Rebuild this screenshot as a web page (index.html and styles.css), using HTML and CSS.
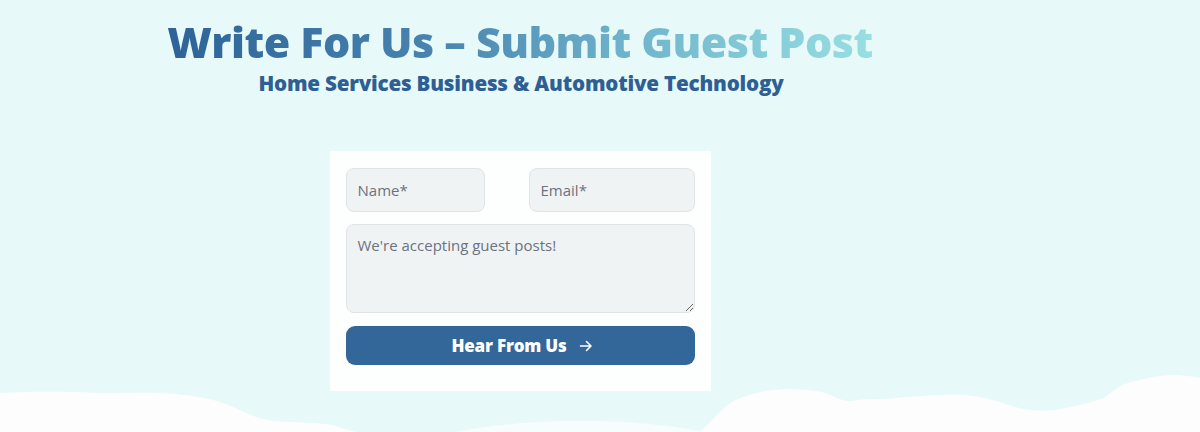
FILE: index.html
```html
<!DOCTYPE html>
<html lang="en">
<head>
<meta charset="utf-8">
<title>Write For Us – Submit Guest Post</title>
<link rel="stylesheet" href="styles.css">
</head>
<body>
<main class="page">
  <section class="column">
    <h1 class="title"><span class="title-grad">Write For Us – Submit Guest Post</span></h1>
    <p class="subtitle">Home Services Business &amp; Automotive Technology</p>
    <form class="card">
      <div class="row">
        <input class="field field-name" type="text" placeholder="Name*">
        <input class="field field-email" type="email" placeholder="Email*">
      </div>
      <textarea class="field area" placeholder="We're accepting guest posts!"></textarea>
      <button class="btn" type="button">Hear From Us
        <svg class="arrow" width="14" height="14" viewBox="0 0 14 14" aria-hidden="true"><path d="M1.5 7h10.5M7.5 2.5 12 7l-4.5 4.5" fill="none" stroke="#fff" stroke-width="1.6" stroke-linecap="round" stroke-linejoin="round"/></svg>
      </button>
    </form>
  </section>
  <svg class="clouds" viewBox="0 360 1200 72" preserveAspectRatio="none" aria-hidden="true">
    <path fill="#fdfdfd" d="M0 393 C30 392 60 391 95 393 C125 394 150 391 184 395 C205 397 220 401 235 408 C248 414 258 419 272 421 C295 423 315 422 332 425 C342 428 348 430 356 432 L0 432 Z"/>
    <path fill="#f7fcfc" d="M455 432 C490 425 540 420 600 421 C650 423 680 427 705 432 Z"/>
    <path fill="#fdfdfd" d="M700 432 C715 418 725 404 738 399 C752 393 770 389 792 389 C810 390 820 391 828 394 C838 398 844 402 852 401 C862 399 872 399 885 399 C910 397 940 394 965 395 C985 397 1000 402 1012 406 C1024 410 1040 412 1056 410 C1075 406 1090 403 1104 398 C1112 392 1118 386 1128 383 C1142 379 1155 376 1170 375 C1185 375 1195 377 1200 378 L1200 432 Z"/>
  </svg>
</main>
</body>
</html>
```
FILE: styles.css
```css
* { box-sizing: border-box; }
html, body { margin: 0; padding: 0; }
body {
  background: #e8f9f9;
  font-family: "Open Sans", "Liberation Sans", sans-serif;
  width: 1200px;
  height: 432px;
  overflow: hidden;
}
.page {
  position: relative;
  width: 1200px;
  height: 432px;
}
.column {
  position: relative;
  z-index: 2;
  width: 1040px;
  display: flex;
  flex-direction: column;
  align-items: center;
  padding-top: 18px;
}
.title {
  margin: 0;
  font-size: 43px;
  line-height: 48px;
  font-weight: 800;
  letter-spacing: -0.55px;
  white-space: nowrap;
}
.title-grad {
  background: linear-gradient(90deg, #2d6398 0%, #4a86b0 40%, #6fb3cb 65%, #98dfe3 100%);
  -webkit-background-clip: text;
  background-clip: text;
  color: transparent;
}
.subtitle {
  margin: 0;
  margin-top: 4px;
  font-size: 20.6px;
  line-height: 26px;
  font-weight: 800;
  color: #2e5f94;
  letter-spacing: -0.2px;
  padding-left: 2px;
}
.card {
  margin-top: 55px;
  width: 381px;
  height: 240px;
  background: #fdfefe;
  padding: 17px 16px 26px;
  display: flex;
  flex-direction: column;
  gap: 12px;
}
.row {
  display: flex;
  justify-content: space-between;
}
.field {
  font-family: "Open Sans", "Liberation Sans", sans-serif;
  font-size: 15px;
  background: #f0f3f4;
  border: 1px solid #e0e4e7;
  border-radius: 8px;
  color: #374151;
  padding: 0 11px;
  outline: none;
}
.field::placeholder { color: #6b7280; }
.field-name { width: 139px; height: 44px; }
.field-email { width: 166px; height: 44px; }
.area {
  width: 349px;
  height: 89px;
  padding-top: 10px;
  resize: vertical;
}
.btn {
  margin-top: 1px;
  width: 349px;
  height: 39px;
  border: none;
  border-radius: 9px;
  background: #336699;
  color: #fff;
  font-family: "Open Sans", "Liberation Sans", sans-serif;
  font-size: 17px;
  font-weight: 800;
  letter-spacing: -0.2px;
  display: flex;
  align-items: center;
  justify-content: center;
  gap: 12px;
  padding: 0 0 0 4px;
}
.arrow { display: block; }
.clouds {
  position: absolute;
  left: 0;
  bottom: 0;
  width: 1200px;
  height: 72px;
  z-index: 1;
}
```
